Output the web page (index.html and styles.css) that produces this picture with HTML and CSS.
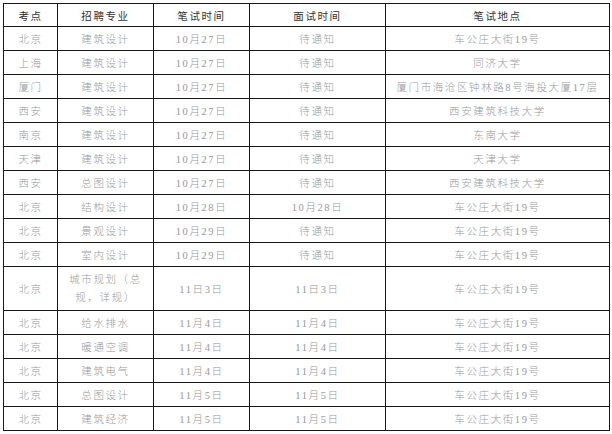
FILE: index.html
```html
<!DOCTYPE html>
<html lang="zh-CN">
<head>
<meta charset="utf-8">
<link rel="stylesheet" href="styles.css">
</head>
<body>
<table class="sched">
  <colgroup>
    <col class="c1"><col class="c2"><col class="c3"><col class="c4"><col class="c5">
  </colgroup>
  <thead>
    <tr class="head"><th>考点</th><th>招聘专业</th><th>笔试时间</th><th>面试时间</th><th>笔试地点</th></tr>
  </thead>
  <tbody>
    <tr><td>北京</td><td>建筑设计</td><td>10月27日</td><td>待通知</td><td>车公庄大街19号</td></tr>
    <tr><td>上海</td><td>建筑设计</td><td>10月27日</td><td>待通知</td><td>同济大学</td></tr>
    <tr><td>厦门</td><td>建筑设计</td><td>10月27日</td><td>待通知</td><td>厦门市海沧区钟林路8号海投大厦17层</td></tr>
    <tr><td>西安</td><td>建筑设计</td><td>10月27日</td><td>待通知</td><td>西安建筑科技大学</td></tr>
    <tr><td>南京</td><td>建筑设计</td><td>10月27日</td><td>待通知</td><td>东南大学</td></tr>
    <tr><td>天津</td><td>建筑设计</td><td>10月27日</td><td>待通知</td><td>天津大学</td></tr>
    <tr><td>西安</td><td>总图设计</td><td>10月27日</td><td>待通知</td><td>西安建筑科技大学</td></tr>
    <tr><td>北京</td><td>结构设计</td><td>10月28日</td><td>10月28日</td><td>车公庄大街19号</td></tr>
    <tr><td>北京</td><td>景观设计</td><td>10月29日</td><td>待通知</td><td>车公庄大街19号</td></tr>
    <tr><td>北京</td><td>室内设计</td><td>10月29日</td><td>待通知</td><td>车公庄大街19号</td></tr>
    <tr class="tall"><td>北京</td><td class="wrap">城市规划（总规，详规）</td><td>11日3日</td><td>11日3日</td><td>车公庄大街19号</td></tr>
    <tr><td>北京</td><td>给水排水</td><td>11月4日</td><td>11月4日</td><td>车公庄大街19号</td></tr>
    <tr><td>北京</td><td>暖通空调</td><td>11月4日</td><td>11月4日</td><td>车公庄大街19号</td></tr>
    <tr><td>北京</td><td>建筑电气</td><td>11月4日</td><td>11月4日</td><td>车公庄大街19号</td></tr>
    <tr><td>北京</td><td>总图设计</td><td>11月5日</td><td>11月5日</td><td>车公庄大街19号</td></tr>
    <tr><td>北京</td><td>建筑经济</td><td>11月5日</td><td>11月5日</td><td>车公庄大街19号</td></tr>
  </tbody>
</table>
</body>
</html>
```

FILE: styles.css
```css
html, body {
  margin: 0;
  padding: 0;
  background: #ffffff;
}

body {
  padding: 3px 0 0 3px;
  font-family: "Liberation Serif", "Noto Sans CJK SC", serif;
}

.sched {
  border-collapse: collapse;
  table-layout: fixed;
  width: 606px;
}

.c1 { width: 54px; }
.c2 { width: 96px; }
.c3 { width: 96px; }
.c4 { width: 136px; }
.c5 { width: 224px; }

.sched th,
.sched td {
  border: 1px solid #1a1a1a;
  padding: 0 2px;
  text-align: center;
  vertical-align: middle;
  font-size: 10.5px;
  letter-spacing: 1.6px;
  white-space: nowrap;
  overflow: hidden;
  box-sizing: border-box;
}

.sched th {
  height: 23px;
  font-weight: normal;
  color: #333333;
}

.sched td {
  height: 24px;
  color: #999999;
  font-weight: 300;
}

.sched tr.tall td {
  height: 44px;
}

.sched td.wrap {
  white-space: normal;
  line-height: 18px;
  padding: 0 10px;
}
```
